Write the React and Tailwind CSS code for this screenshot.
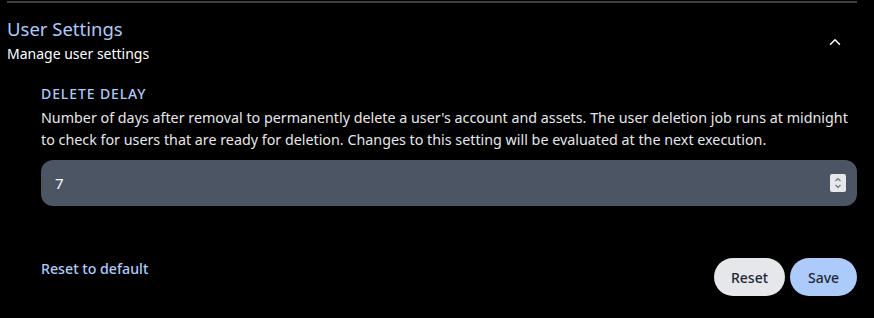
import { ChevronUp } from "lucide-react";

const App = () => {
  return (
    <div
      className="w-[874px] h-[318px] bg-black text-white overflow-hidden"
      style={{ fontFamily: '"Noto Sans", "Open Sans", sans-serif' }}
    >
      <div className="ml-[7px] w-[850px] pt-[1px]">
        <div className="border-t-2 border-[#3f3f3f]" />

        <div className="flex items-center justify-between pt-[13px]">
          <div>
            <h2 className="text-[18.5px] leading-[25px] text-[#adcbfa]">User Settings</h2>
            <p className="mt-[3px] text-[14px] leading-[20px] text-white">Manage user settings</p>
          </div>
          <button className="mr-[9px] mt-[4px] p-1 text-white">
            <ChevronUp size={18} strokeWidth={2} />
          </button>
        </div>

        <div className="pl-[34px] pt-[20px]">
          <label className="block text-[14px] leading-[20px] font-medium text-[#adcbfa] tracking-[0.9px]">
            DELETE DELAY
          </label>
          <p className="mt-[3px] pr-[6px] text-[14.3px] leading-[22px] text-[#e5e7eb]">
            Number of days after removal to permanently delete a user's account and assets. The user deletion job runs at midnight to check for users that are ready for deletion. Changes to this setting will be evaluated at the next execution.
          </p>
          <div className="mt-[9px] h-[46px] rounded-xl bg-[#4b5563] flex items-center justify-between pl-[14px] pr-[11px]">
            <span className="text-[15px] text-white">7</span>
            <div className="w-[16px] h-[18px] bg-[#e5e7eb] rounded-[2px] flex flex-col items-center justify-center text-[#6b7280]">
              <svg width="8" height="14" viewBox="0 0 8 14" fill="none" stroke="currentColor" strokeWidth="1.2">
                <path d="M1.5 5 L4 2.5 L6.5 5" />
                <path d="M1.5 9 L4 11.5 L6.5 9" />
              </svg>
            </div>
          </div>

          <div className="mt-[52px] flex items-start justify-between">
            <button className="mt-[1px] text-[14.2px] leading-[20px] text-[#adcbfa] font-medium">Reset to default</button>
            <div className="flex gap-[5px]">
              <button className="h-[38px] w-[71px] rounded-full bg-[#e5e7eb] text-[#1f2937] text-[14px] font-medium">
                Reset
              </button>
              <button className="h-[38px] w-[67px] rounded-full bg-[#adcbfa] text-[#1f2937] text-[14px] font-medium">
                Save
              </button>
            </div>
          </div>
        </div>
      </div>
    </div>
  );
};

export default App;
